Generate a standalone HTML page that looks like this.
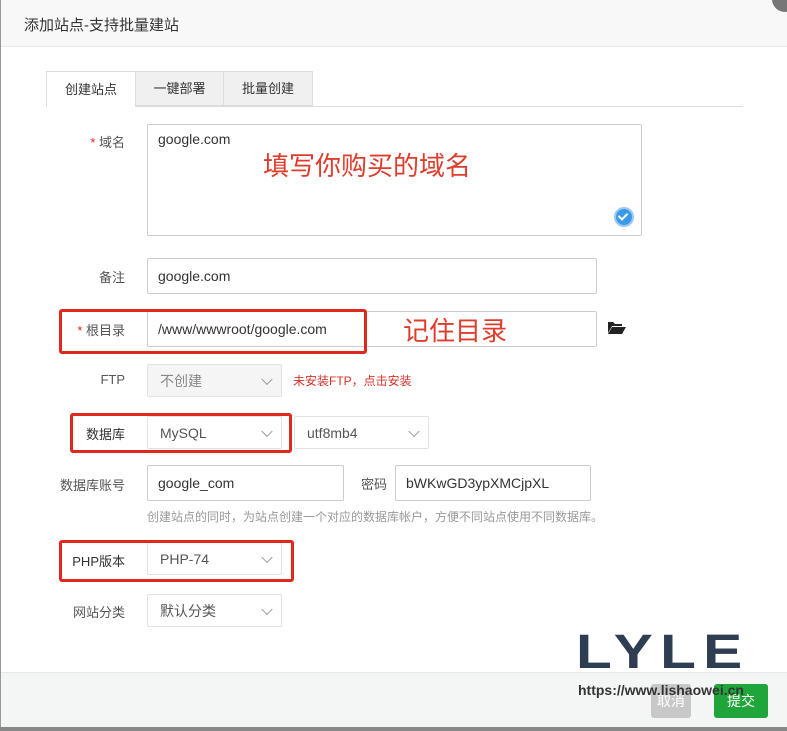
<!DOCTYPE html>
<html><head><meta charset="utf-8"><style>
*{box-sizing:border-box;margin:0;padding:0}
body{width:787px;height:731px;position:relative;overflow:hidden;background:#fff;font-family:"Liberation Sans","Noto Sans CJK SC",sans-serif;color:#555;font-size:14px}
.a{position:absolute}
.in{position:absolute;border:1px solid #ccc;border-radius:2px;background:#fff;padding-left:10px;color:#333;font-size:14px;display:flex;align-items:center}
.sel{position:absolute;border:1px solid #e2e2e2;border-radius:2px;background:#fff;padding-left:12px;color:#555;font-size:14px;display:flex;align-items:center}
.sel:after{content:"";position:absolute;right:10px;top:50%;width:7px;height:7px;border-right:1px solid #999;border-bottom:1px solid #999;transform:translateY(-70%) rotate(45deg)}
.lb{position:absolute;font-size:13px;color:#555;text-align:right;width:120px}
.rb{position:absolute;border:3px solid #e0281e;border-radius:3px}
.st{color:#e0281e}
</style></head><body>
<div class="a" style="left:0;top:0;width:1px;height:731px;background:#999"></div>
<div class="a" style="left:1px;top:0;width:786px;height:47px;background:#f8f8f8;border-bottom:1px solid #e8e8e8"></div>
<div class="a" style="left:24px;top:14px;font-size:15px;color:#333">添加站点-支持批量建站</div>
<div class="a" style="left:772px;top:-14px;width:26px;height:26px;border-radius:50%;background:#777"></div>
<div class="a" style="left:46px;top:106px;width:697px;height:1px;background:#ddd"></div>
<div class="a" style="left:46px;top:71px;width:90px;height:36px;border:1px solid #ddd;border-bottom:none;background:#fff;font-size:13px;color:#333;text-align:center;line-height:35px">创建站点</div>
<div class="a" style="left:135px;top:71px;width:89px;height:35px;border:1px solid #ddd;background:#f0f0f0;font-size:13px;color:#333;text-align:center;line-height:34px">一键部署</div>
<div class="a" style="left:223px;top:71px;width:90px;height:35px;border:1px solid #ddd;background:#f0f0f0;font-size:13px;color:#333;text-align:center;line-height:34px">批量创建</div>

<div class="lb" style="left:5px;top:132px"><span class="st">*</span> 域名</div>
<div class="in" style="left:147px;top:124px;width:495px;height:112px;align-items:flex-start;padding-top:6px">google.com</div>
<div class="a" style="left:263px;top:146px;font-size:26px;color:#e03c2c">填写你购买的域名</div>
<div class="a" style="left:614px;top:207px;width:20px;height:20px;border-radius:50%;background:#3a9ae8;border:2px solid #9cc9f2"></div>
<div class="a" style="left:620px;top:211px;width:6px;height:9px;border-right:2px solid #fff;border-bottom:2px solid #fff;transform:rotate(45deg)"></div>

<div class="lb" style="left:5px;top:267px">备注</div>
<div class="in" style="left:147px;top:258px;width:450px;height:36px">google.com</div>

<div class="lb" style="left:5px;top:320px"><span class="st">*</span> 根目录</div>
<div class="in" style="left:147px;top:311px;width:450px;height:36px">/www/wwwroot/google.com</div>
<div class="rb" style="left:59px;top:309px;width:308px;height:45px"></div>
<div class="a" style="left:403px;top:311px;font-size:26px;color:#e03c2c">记住目录</div>
<svg class="a" style="left:607px;top:320px" width="19" height="15" viewBox="0 0 19 15"><path d="M1 2h5l2 2h7v2H5L1 13z" fill="#222"/><path d="M5 7h14l-4 7H1z" fill="#222"/></svg>

<div class="lb" style="left:5px;top:372px">FTP</div>
<div class="sel" style="left:147px;top:364px;width:135px;height:33px;background:#f5f5f5;color:#888">不创建</div>
<div class="a" style="left:293px;top:372px;font-size:12px;color:#d9302a">未安装FTP，点击安装</div>

<div class="lb" style="left:5px;top:424px;color:#333">数据库</div>
<div class="sel" style="left:147px;top:416px;width:135px;height:33px">MySQL</div>
<div class="sel" style="left:294px;top:416px;width:135px;height:33px">utf8mb4</div>
<div class="rb" style="left:70px;top:413px;width:222px;height:40px"></div>

<div class="lb" style="left:5px;top:475px">数据库账号</div>
<div class="in" style="left:147px;top:465px;width:197px;height:36px">google_com</div>
<div class="a" style="left:361px;top:474px;font-size:13px;color:#555">密码</div>
<div class="in" style="left:395px;top:465px;width:196px;height:36px">bWKwGD3ypXMCjpXL</div>
<div class="a" style="left:147px;top:508px;font-size:12px;color:#999">创建站点的同时，为站点创建一个对应的数据库帐户，方便不同站点使用不同数据库。</div>

<div class="lb" style="left:5px;top:551px;color:#333">PHP版本</div>
<div class="sel" style="left:147px;top:542px;width:135px;height:33px">PHP-74</div>
<div class="rb" style="left:59px;top:540px;width:235px;height:42px"></div>

<div class="lb" style="left:5px;top:602px">网站分类</div>
<div class="sel" style="left:147px;top:594px;width:135px;height:33px">默认分类</div>

<div class="a" style="left:1px;top:672px;width:786px;height:58px;background:#f4f5f5;border-top:1px solid #e8e8e8"></div>
<div class="a" style="left:0;top:727px;width:787px;height:4px;background:#888"></div>
<div class="a" style="left:651px;top:684px;width:40px;height:34px;background:#c8c8c8;border-radius:3px;color:#fff;font-size:14px;line-height:34px;text-align:center">取消</div>
<div class="a" style="left:714px;top:684px;width:54px;height:34px;background:#20a53a;border-radius:3px;color:#fff;font-size:14px;line-height:34px;text-align:center">提交</div>
<div class="a" style="left:576px;top:629px;font-size:48px;font-weight:bold;color:#2f3d52;letter-spacing:6px;line-height:48px;transform:scaleX(1.22);transform-origin:left">LYLE</div>
<div class="a" style="left:578px;top:682px;font-size:14px;font-weight:bold;color:#333">https://www.lishaowei.cn</div>
</body></html>
